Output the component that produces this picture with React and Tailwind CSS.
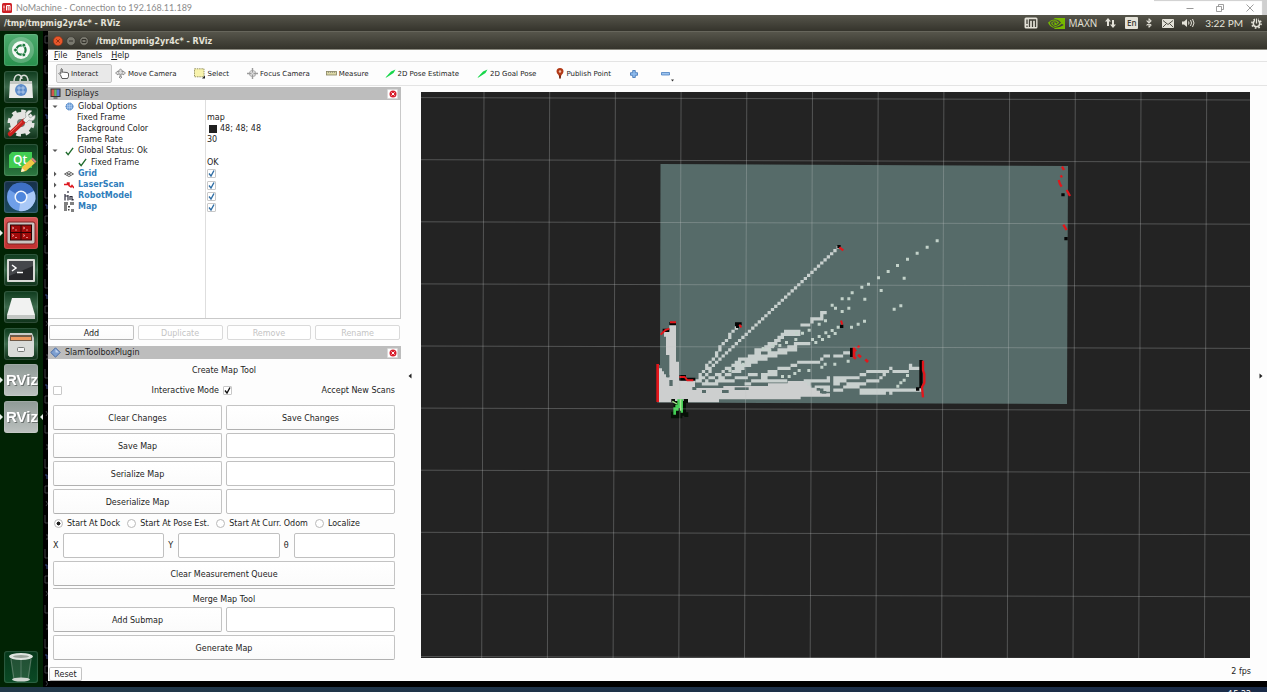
import React from "react";
import { SiNvidia } from "react-icons/si";
import { Bluetooth } from "lucide-react";

/* ---------- occupancy map drawing ---------- */

const CELL_W = 9.86;
const CELL_H = 9.3;

// Chains of free-space cells: t is the thickness in cells
const RAYS = [
  { t: 1, pts: [[172, 238], [188, 210], [225, 165], [250, 130], [290, 82]] },
  { t: 1, pts: [[178, 243], [270, 146], [362, 62], [430, 2], [595, -153]] },
  { t: 1, pts: [[205, 240], [250, 215], [290, 192], [345, 160]] },
  { t: 1, pts: [[290, 182], [330, 178]] },
  { t: 2, pts: [[345, 158], [360, 150]] },
  { t: 1, pts: [[360, 155], [385, 145]] },
  { t: 2, pts: [[380, 140], [410, 120], [440, 97], [480, 90]] },
  { t: 1, pts: [[484, 72], [510, 72], [516, 54], [545, 52], [547, 34], [560, 34]] },
  { t: 1, pts: [[488, 78], [510, 76]] },
  { t: 1, pts: [[225, 240], [285, 215], [330, 195]] },
  { t: 2, pts: [[290, 205], [350, 175], [420, 152], [470, 138]] },
  { t: 1, pts: [[470, 135], [510, 128]] },
  { t: 1, pts: [[195, 256], [250, 245], [300, 235], [350, 222]] },
  { t: 2, pts: [[370, 222], [410, 215]] },
  { t: 1, pts: [[410, 212], [440, 205], [460, 200], [480, 185], [540, 183], [560, 172], [600, 165], [632, 155]] },
  { t: 1, pts: [[320, 250], [380, 240], [440, 238]] },
  { t: 1, pts: [[500, 245], [560, 240], [580, 230], [650, 232], [680, 215], [740, 212], [755, 202], [760, 212], [805, 210], [815, 192], [820, 202], [840, 202]] },
  { t: 1, pts: [[510, 256], [560, 262], [600, 245], [650, 252], [710, 242], [730, 225]] },
  { t: 1, pts: [[560, 240], [610, 240], [640, 232]] },
  { t: 1, pts: [[535, 262], [570, 275], [620, 262], [680, 268], [840, 268]] },
  { t: 2, pts: [[660, 273], [715, 273]] },
  { t: 1, pts: [[715, 276], [748, 276]] },
];

const DOTS = [
  [577, 15], [587, 24], [607, 34], [627, 24], [627, -4], [607, -4], [637, -22], [666, -39], [686, -48],
  [716, -67], [745, -86], [773, -104], [803, -123], [832, -141], [862, -159], [892, -178],
  [793, -66], [724, -29], [675, -3], [783, 17], [763, 27], [674, 63], [655, 72], [635, 81],
  [595, 81], [577, 91], [586, 100], [567, 109], [558, 98], [548, 118], [538, 109], [528, 127], [518, 118],
  [557, 62], [538, 72], [508, 90], [488, 99], [470, 99], [468, 118], [440, 127], [420, 136], [400, 136],
  [625, 183], [585, 192], [556, 192], [546, 201], [507, 211], [478, 211], [465, 220], [448, 229], [428, 229],
  [774, 258], [783, 248], [793, 240], [803, 226], [310, 192], [270, 212], [370, 145], [390, 150],
];

const GAPS = [
  [157, 261, 12, 9], [186, 270, 12, 9], [246, 270, 20, 9], [284, 262, 42, 8],
  [514, 255, 10, 8], [530, 264, 10, 8], [545, 273, 14, 8],
];

function snap(x, y) {
  return [Math.floor((x - 8) / CELL_W), Math.floor((y + 4) / CELL_H)];
}

function buildFreeCells() {
  const cells = new Set();
  const add = (x, y, t) => {
    const [cx, cy] = snap(x, y);
    for (let k = 0; k < t; k += 1) cells.add(`${cx},${cy + k}`);
  };
  RAYS.forEach(({ t, pts }) => {
    for (let i = 0; i < pts.length - 1; i += 1) {
      const [x1, y1] = pts[i];
      const [x2, y2] = pts[i + 1];
      const steps = Math.max(
        1,
        Math.round(Math.max(Math.abs(x2 - x1) / CELL_W, Math.abs(y2 - y1) / CELL_H))
      );
      for (let s = 0; s <= steps; s += 1) {
        add(x1 + ((x2 - x1) * s) / steps, y1 + ((y2 - y1) * s) / steps, t);
      }
    }
  });
  return [...cells]
    .map((key) => {
      const [cx, cy] = key.split(",").map(Number);
      return `M${(cx * CELL_W + 8).toFixed(1)} ${(cy * CELL_H - 4).toFixed(1)}h9.9v9.4h-9.9z`;
    })
    .join("");
}

const FREE_CELLS = buildFreeCells();
const DOT_CELLS = DOTS.map(([x, y]) => `M${x - 5} ${y - 4}h9v9h-9z`).join("");
const VERTICALS = Array.from({ length: 12 }, (_, i) => 484 + i * 65.7);
const HORIZONTALS = Array.from({ length: 10 }, (_, i) => 97.6 + i * 62.1);

function MapView() {
  return (
    <svg
      viewBox="421 92 829 566"
      preserveAspectRatio="xMidYMid slice"
      className="block min-h-0 w-full flex-1 bg-[#232323]"
      role="img"
      aria-label="Map view"
    >
      <path d="M660.500 164L1068 166L1067 404L657 402.500L657 365L660 365z" fill="#566b69" />
      <g transform="translate(640 300) scale(.33333)">
        <path
          d="M88 75H108V185H117V240H165V264H250V258H384V250H443V243H512V262H540V280H570V290H482V298H237V307H57V205H66V214H72V223H78V232H88V165H78V110H72V92H88Z"
          fill="#cdcfcf"
        />
        <path d="M81 232H88V258H98V240H88V225H81Z" fill="#566b69" />
        <path d={FREE_CELLS} fill="#c8d0ce" />
        <path d={DOT_CELLS} fill="#c3d2ca" />
        {GAPS.map(([x, y, w, h]) => (
          <rect key={`${x}-${y}`} x={x} y={y} width={w} height={h} fill="#566b69" />
        ))}
        <path
          d="M88 66h20v10h-20zM68 86h20v10h-20zM118 225h20v8h28v9h-48zM285 67h20v9h-8v8h-9v-6h-3zM600 74h10v10h-10zM630 143h9v28h-9zM838 180h10v84h-10v8h-10v-10h10zM592-165h10v10h-10zM1264-320h10v9h-10zM1273-189h10v10h-10z"
          fill="#050505"
        />
        <g fill="none" stroke="#e3161b" strokeWidth="6">
          <path d="M53 192V306" strokeWidth="8" />
          <path d="M90 67H108M88 86L76 90L62 104M118 231H134L142 241H160" />
          <path d="M298 74L304 82M603 62L607 74" />
          <path d="M642 142V172L648 176M642 155L648 148M653 138L658 143M654 164L663 172M676 178L684 186" strokeWidth="8" />
          <path d="M849 182V210L853 222V248L846 262L849 292" strokeWidth="7" />
          <path d="M598-158L610-149M1266-400L1272-390M1262-374L1266-368M1256-360L1260-348L1265-340M1280-330L1290-312M1270-226L1280-210" strokeWidth="7" />
        </g>
        <path d="M94 297h11v6h26v-6h13v12h-6v28h7v14h-12v-4h-6v8h-34v-20h8v-28h-7z" fill="#071007" />
        <path d="M112 298h17v40h-7v-14h-6v8h-8v12h-8v-22h6v-8h6z" fill="#43cf54" />
        <path d="M97 304l14 8M122 298v34" stroke="#a6e88d" strokeWidth="4" />
      </g>
      <g stroke="#c4c8c8" strokeOpacity=".3" strokeWidth="1" fill="none">
        {VERTICALS.map((x) => (
          <path key={x} d={`M${x} 92L${x - 2.3} 658`} />
        ))}
        {HORIZONTALS.map((y) => (
          <path key={y} d={`M421 ${y}L1250 ${y + 2.4}`} />
        ))}
      </g>
    </svg>
  );
}

/* ---------- launcher ---------- */

function UbuntuIcon() {
  return (
    <svg viewBox="0 0 34 32" className="size-full">
      <circle cx="17" cy="16" r="13" fill="#fff" fillOpacity=".22" />
      <circle cx="17" cy="16" r="9" fill="#f6faf7" />
      <circle cx="17" cy="16" r="4.600" fill="none" stroke="#1c7a3e" strokeWidth="2.200" />
      <g fill="#1c7a3e" stroke="#f6faf7" strokeWidth=".8">
        <circle cx="11.500" cy="16" r="1.900" />
        <circle cx="19.800" cy="11.200" r="1.900" />
        <circle cx="19.800" cy="20.800" r="1.900" />
      </g>
    </svg>
  );
}

function SoftwareIcon() {
  return (
    <svg viewBox="0 0 34 32" className="size-full">
      <path d="M10 11c0-9 7-9 8-3M16 11c0-9 8-9 8 0" fill="none" stroke="#d8dcd8" strokeWidth="1.500" />
      <path d="M6 10h22l1 17H5z" fill="#e9ebe8" />
      <path d="M6 10h22v3H6z" fill="#c4c8c3" />
      <circle cx="17" cy="19" r="6" fill="#5e8dc9" />
      <path d="M13 17h8M13 21h8M15 15v8M19 15v8" stroke="#c9dcf2" strokeWidth=".7" />
    </svg>
  );
}

function SettingsIcon() {
  return (
    <svg viewBox="0 0 34 32" className="size-full">
      <circle cx="17" cy="16" r="11.500" fill="none" stroke="#e4e4e2" strokeWidth="4" strokeDasharray="4.500 4.500" />
      <circle cx="17" cy="16" r="7.500" fill="#6d7771" stroke="#e4e4e2" strokeWidth="7" />
      <path d="M6 27L20 14" stroke="#c9201e" strokeWidth="4.500" strokeLinecap="round" />
      <path d="M6.500 25.500L18 14.500" stroke="#f17067" strokeWidth="1" />
      <path d="M19 13l3-3c-2-5 3-8 6-6l-4 4 2 3 5-3c1 5-3 7-6 5l-3 3z" fill="#eceeec" stroke="#8f9692" strokeWidth=".6" />
    </svg>
  );
}

function QtIcon() {
  return (
    <svg viewBox="0 0 34 32" className="size-full">
      <path d="M8 8h20v16H5V11z" fill="#41cd52" />
      <text x="9" y="20" fontSize="12" fontWeight="600" fill="#fff" fontFamily="Open Sans, sans-serif">Qt</text>
      <path d="M17 28l1-5 9-8 4 4-9 8z" fill="#f2c744" />
      <path d="M27 15l4 4 1.500-1.500-4-4z" fill="#d9807c" />
      <path d="M17 28l1-4 3 3z" fill="#fff2d0" />
    </svg>
  );
}

function ChromiumIcon() {
  return (
    <svg viewBox="0 0 34 32" className="size-full">
      <circle cx="17" cy="16" r="14" fill="#6f9fe8" />
      <path d="M17 16L5 8.500A14 14 0 0 1 30 10z" fill="#3e6fc4" />
      <path d="M17 16L15 30A14 14 0 0 0 30 10z" fill="#a9c8f7" />
      <circle cx="17" cy="16" r="6.500" fill="#f3f7fd" />
      <circle cx="17" cy="16" r="5" fill="#4f86dd" />
    </svg>
  );
}

function TerminatorIcon() {
  return (
    <svg viewBox="0 0 34 32" className="size-full">
      <rect x="3" y="5" width="28" height="22" rx="2" fill="#c9c3c0" stroke="#7d2222" />
      <rect x="6" y="7.500" width="22" height="16" fill="#2b0303" />
      <path d="M7 8.500h9.500v6.500H7zM17.500 8.500H27v6.500h-9.500zM7 16h9.500v6.500H7zM17.500 16H27v6.500h-9.500z" fill="#a30a0a" />
      <path d="M8 10l2 1-2 1M19 10l2 1-2 1M8 17.500l2 1-2 1M19 17.500l2 1-2 1M11 13h2M22 13h2M11 20.500h2M22 20.500h2" stroke="#f5b5b0" strokeWidth=".7" fill="none" />
    </svg>
  );
}

function TerminalIcon() {
  return (
    <svg viewBox="0 0 34 32" className="size-full">
      <rect x="3" y="5" width="28" height="23" rx="1" fill="#d8dad6" />
      <rect x="5" y="7" width="24" height="19" fill="#27282b" />
      <path d="M5 7h24v5L5 22z" fill="#45474b" />
      <path d="M8 11l4 3-4 3M13 18.500h6" stroke="#fff" strokeWidth="1.500" fill="none" />
    </svg>
  );
}

function DiskIcon() {
  return (
    <svg viewBox="0 0 34 32" className="size-full">
      <path d="M8 7h18l5 17H3z" fill="#f1f2f1" />
      <path d="M3 24h28v4H3z" fill="#c3c7c4" />
    </svg>
  );
}

function FilesIcon() {
  return (
    <svg viewBox="0 0 34 32" className="size-full">
      <path d="M6 5h22l2 5v17l-2 2H6l-2-2V10z" fill="#c9cbc8" />
      <path d="M6 7h22v6H6z" fill="#6f5a48" />
      <path d="M7 9h20v3H7z" fill="#ee9a5f" />
      <path d="M4 13h26v14l-2 2H6l-2-2z" fill="#d9dbd8" />
      <rect x="13.500" y="19.500" width="7" height="4" rx="1" fill="#f5f5f5" stroke="#777b78" />
    </svg>
  );
}

function RvizIcon() {
  return (
    <svg viewBox="0 0 34 32" className="size-full drop-shadow-[1px_1px_0_#6c7270]">
      <text x="2" y="21" fontSize="15" fontWeight="700" fill="#fff" fontFamily="Liberation Sans, sans-serif">RViz</text>
    </svg>
  );
}

function TrashIcon() {
  return (
    <svg viewBox="0 0 34 32" className="size-full">
      <path d="M6 6l3 23h16l3-23z" fill="#8fa597" fillOpacity=".2" />
      <path d="M7 8l3 20M27 8l-3 20M17 9v19" stroke="#b9c6bd" strokeOpacity=".35" />
      <ellipse cx="17" cy="5.500" rx="12" ry="3.500" fill="#dde3de" />
      <ellipse cx="17" cy="5.500" rx="8" ry="1.500" fill="#98a39a" />
      <ellipse cx="17" cy="28.500" rx="9" ry="2" fill="#cfd6d0" />
    </svg>
  );
}

const TILE = "bg-gradient-to-b from-[#0c3a1c] via-[#3c6a4c] to-[#0d3018]";
const LAUNCHER = [
  { name: "Search your computer", Icon: UbuntuIcon, bg: "bg-gradient-to-b from-[#4dab6e] to-[#27914c]" },
  { name: "Ubuntu Software", Icon: SoftwareIcon, bg: TILE },
  { name: "System Settings", Icon: SettingsIcon, bg: TILE },
  { name: "Qt Creator", Icon: QtIcon, bg: "bg-gradient-to-b from-[#0c3a1c] to-[#2d7a40]" },
  { name: "Chromium", Icon: ChromiumIcon, bg: "bg-gradient-to-b from-[#16304a] to-[#1c4a5c]" },
  { name: "Terminator", Icon: TerminatorIcon, bg: "bg-gradient-to-b from-[#d65555] to-[#c22d2d]", left: true },
  { name: "Terminal", Icon: TerminalIcon, bg: TILE },
  { name: "Disk", Icon: DiskIcon, bg: TILE },
  { name: "Files", Icon: FilesIcon, bg: TILE },
  { name: "RViz", Icon: RvizIcon, bg: "bg-gradient-to-b from-[#8f9a96] to-[#bcc1bf]", left: true },
  { name: "RViz window", Icon: RvizIcon, bg: "bg-gradient-to-b from-[#8f9a96] to-[#bcc1bf]", left: true, right: true },
];

function Launcher() {
  return (
    <nav aria-label="Launcher" className="flex w-[43px] shrink-0 flex-col justify-between bg-[#012304] pt-[3px] pb-1">
      <div className="flex h-[399px] flex-col justify-between">
        {LAUNCHER.map(({ name, Icon, bg, left, right }) => (
          <div key={name} className="relative flex px-1">
            <button
              type="button"
              aria-label={name}
              className={`h-8 w-[34px] overflow-hidden rounded-[3px] shadow-[inset_0_0_1px_1px_rgba(255,255,255,0.15)] ${bg}`}
            >
              <Icon />
            </button>
            {left && (
              <svg viewBox="0 0 3 6" className="absolute top-[13px] left-0 h-[6px] w-[3px]"><path d="M0 0l3 3-3 3z" fill="#e8efe9" /></svg>
            )}
            {right && (
              <svg viewBox="0 0 3 6" className="absolute top-[13px] right-0 h-[6px] w-[3px]"><path d="M3 0L0 3l3 3z" fill="#e8efe9" /></svg>
            )}
          </div>
        ))}
      </div>
      <div className="flex px-1">
        <button type="button" aria-label="Trash" className="h-8 w-[34px] overflow-hidden rounded-[3px] bg-gradient-to-b from-[#06381a] to-[#0b4a25] shadow-[inset_0_0_1px_1px_rgba(255,255,255,0.15)]">
          <TrashIcon />
        </button>
      </div>
    </nav>
  );
}

/* ---------- toolbar icons ---------- */

const I = "size-[11px] shrink-0";

const HandIcon = () => (
  <svg viewBox="0 0 11 11" className={I}><path d="M2.500 7L1 5.500l.8-.8L3 5.500V1.200Q3.500.2 4.200 1.200V4.200h1.300l3.700.3q1.300.3 1.300 1.500V8.500L9.500 10.500H4z" fill="#fff" stroke="#333" strokeWidth=".8" /></svg>
);
const MoveIcon = () => (
  <svg viewBox="0 0 11 11" className={I}><path d="M5.500 10.500L4 9h1V6H3v1L.5 5 3 3v1h1V3H3.500L5.500.8 7.500 3H7v1h1V3l2.500 2L8 7V6H6v3h1z" fill="#ddd" stroke="#777" strokeWidth=".7" /></svg>
);
const SelectIcon = () => (
  <svg viewBox="0 0 11 11" className={I}><rect x=".5" y=".8" width="9.500" height="8" fill="#f8f3ad" stroke="#8d8a58" strokeDasharray="1.500 .8" strokeWidth=".9" /><path d="M8 10.500h3V7.500z" fill="#222" /></svg>
);
const FocusIcon = () => (
  <svg viewBox="0 0 11 11" className={I}><circle cx="5.500" cy="5.500" r="3" fill="none" stroke="#b0b0b0" strokeWidth="1.200" /><path d="M5.500 0v11M0 5.500h11" stroke="#9b9b9b" strokeWidth="1.400" /><circle cx="5.500" cy="5.500" r="1.100" fill="#ddd" /></svg>
);
const RulerIcon = () => (
  <svg viewBox="0 0 11 11" className={I}><rect x=".5" y="3.500" width="10" height="3.500" fill="#dcd8a6" stroke="#85835f" strokeWidth=".8" /><path d="M2.500 3.500v1.500M4.500 3.500v1.500M6.500 3.500v1.500M8.500 3.500v1.500" stroke="#777" strokeWidth=".6" /></svg>
);
const ArrowIcon = () => (
  <svg viewBox="0 0 11 11" className={I}><path d="M.5 9.500L6 3.500 10.500 1.500 8.500 5 1.500 9.500z" fill="#17d64a" /></svg>
);
const PinIcon = () => (
  <svg viewBox="0 0 8 11" className="h-[11px] w-2 shrink-0"><path d="M4 10.800L2.500 7Q.5 5 .5 3.500a3.500 3.500 0 0 1 7 0Q7.500 5 5.500 7z" fill="#b23a17" /><path d="M3.200 7.500h1.600v3H3.200z" fill="#6d2410" /><circle cx="4" cy="3.500" r="1.200" fill="#f3b9a4" /></svg>
);

function ToolButton({ icon, children, className = "" }) {
  return (
    <button type="button" className={`flex h-[19px] items-center gap-0.5 whitespace-nowrap ${className}`}>
      {icon}
      <span className="pt-px">{children}</span>
    </button>
  );
}

/* ---------- shared controls ---------- */

function CloseButton({ label }) {
  return (
    <button type="button" aria-label={label} className="mr-[3px] flex h-2.5 w-[11px] items-center justify-center rounded-[1px] border border-[#d9d9d9] bg-white">
      <svg viewBox="0 0 8 8" className="size-2 shrink-0"><circle cx="4" cy="4" r="3.500" fill="#d81e2c" /><path d="M2.500 2.500l3 3M5.500 2.500l-3 3" stroke="#fff" strokeWidth="1" /></svg>
    </button>
  );
}

function PanelHeader({ icon, title }) {
  return (
    <header className="flex h-[13px] items-center bg-[#bdbdbd] pl-0.5 text-[#1f1f1f]">
      {icon}
      <h2 className="ml-1 flex-1 pt-px">{title}</h2>
      <CloseButton label={`Close ${title}`} />
    </header>
  );
}

function PushButton({ children, className = "" }) {
  return (
    <button type="button" className={`rounded-[2px] border border-[#c3c3c3] border-b-[#b0b0b0] bg-gradient-to-b from-white to-[#fbfbfb] pt-0.5 ${className}`}>
      {children}
    </button>
  );
}

function TextField({ label }) {
  return <input type="text" aria-label={label} className="h-[25px] w-full min-w-0 rounded-[2px] border border-[#c0c0c0] bg-white px-1" />;
}

function Check({ id, label, checked, blue = false }) {
  return (
    <span className="relative flex size-[9px] shrink-0">
      <input id={id} aria-label={label} type="checkbox" defaultChecked={checked} className="peer size-[9px] appearance-none rounded-[1px] border border-[#c8c8c8] bg-white" />
      <svg viewBox="0 0 9 9" className="pointer-events-none absolute inset-0 hidden size-[9px] peer-checked:block">
        <path d="M2 4.500L4 7L7 1.500" fill="none" stroke={blue ? "#2e6da4" : "#111"} strokeWidth="1.400" />
      </svg>
    </span>
  );
}

/* ---------- displays tree ---------- */

const GearBlue = () => (
  <svg viewBox="0 0 10 10" className="size-[9px]"><circle cx="5" cy="5" r="4" fill="#6c9fda" stroke="#4b7fbd" strokeDasharray="1.500 .8" /><path d="M3 2v6M5 1.500v7M7 2v6M2 4h6M2 6h6" stroke="#c9def5" strokeWidth=".5" /></svg>
);
const Tick = () => (
  <svg viewBox="0 0 10 10" className="size-[9px]"><path d="M1 5.500L3.500 8.500L9 1" fill="none" stroke="#1f6a2c" strokeWidth="1.500" /></svg>
);
const GridGlyph = () => (
  <svg viewBox="0 0 10 10" className="size-2.5"><path d="M.5 5L5 2.500 9.500 5 5 7.500zM2.500 4L7 6.300M7.300 3.700L2.800 6.200" fill="none" stroke="#555" strokeWidth=".9" /></svg>
);
const LaserGlyph = () => (
  <svg viewBox="0 0 10 10" className="size-2.5"><path d="M0 4.500h3.500V3H5v2.500l2 1.500 1-1.500 2 2.500" fill="none" stroke="#dd1821" strokeWidth="1.500" /></svg>
);
const RobotGlyph = () => (
  <svg viewBox="0 0 10 10" className="size-2.5"><path d="M1 3v6.500M1 5h3M4 0v2M4 4v5.500M6 5v4M6 5.500h2V9.500M9 8v1.500" stroke="#2c2c3c" strokeWidth="1.200" fill="none" /></svg>
);
const MapGlyph = () => (
  <svg viewBox="0 0 10 10" className="size-2.5"><path d="M0 0h4v3H3v6H0zM6 0h4v3H6zM7 7h3v3H7z" fill="#808080" /><path d="M4 4h2v1.500H4zM4 7h1.500v1.500H4z" fill="#444" /></svg>
);

const ROWS = [
  { arrow: "down", icon: <GearBlue />, name: "Global Options" },
  { name: "Fixed Frame", pad: "pl-[29px]", value: "map" },
  { name: "Background Color", pad: "pl-[29px]", value: "48; 48; 48", swatch: true },
  { name: "Frame Rate", pad: "pl-[29px]", value: "30" },
  { arrow: "down", icon: <Tick />, name: "Global Status: Ok" },
  { icon: <Tick />, name: "Fixed Frame", pad: "pl-[29px]", value: "OK" },
  { arrow: "right", icon: <GridGlyph />, name: "Grid", bold: true },
  { arrow: "right", icon: <LaserGlyph />, name: "LaserScan", bold: true },
  { arrow: "right", icon: <RobotGlyph />, name: "RobotModel", bold: true },
  { arrow: "right", icon: <MapGlyph />, name: "Map", bold: true },
];

function TreeRow({ arrow, icon, name, value, swatch, bold, pad = "pl-1" }) {
  return (
    <div role="treeitem" className="flex flex-1 items-center">
      <div className={`flex w-[157px] items-center ${pad}`}>
        {arrow && (
          <svg viewBox="0 0 6 6" className="mr-1.5 size-1.5">
            <path d={arrow === "down" ? "M.5 1.500h5L3 4z" : "M2 .5v5L4.500 3z"} fill="#555" />
          </svg>
        )}
        {icon && <span className="mr-1 flex w-2.5 justify-center">{icon}</span>}
        <span className={bold ? "font-bold text-[#2f7dbb]" : ""}>{name}</span>
      </div>
      <div className="flex items-center gap-[3px] pl-0.5">
        {swatch && <span className="ml-0.5 size-2 bg-[#202020]" />}
        {bold ? <Check label={`Show ${name}`} checked blue /> : value}
      </div>
    </div>
  );
}

function DisplaysPanel() {
  return (
    <section>
      <PanelHeader
        title="Displays"
        icon={<svg viewBox="0 0 11 11" className="size-[11px]"><rect x=".5" y=".5" width="10" height="8.500" fill="#333" /><path d="M1.500 1.500h3v6.500h-3z" fill="#d4574e" /><path d="M4.300 1.500h2.500v6.500H4.300z" fill="#62b865" /><path d="M6.700 1.500h2.800v6.500H6.700z" fill="#5b7bd5" /><path d="M3.500 9.500h4v1h-4z" fill="#333" /></svg>}
      />
      <div role="tree" aria-label="Displays" className="h-[219px] border-r border-b border-[#c9c9c9] bg-[linear-gradient(to_right,transparent_157px,#dedede_157px,#dedede_158px,transparent_158px)] bg-white pt-px">
        <div className="flex h-28 flex-col">
          {ROWS.map((row, i) => (
            <TreeRow key={i} {...row} />
          ))}
        </div>
      </div>
      <div className="grid grid-cols-4 gap-1 px-px pt-1.5">
        <PushButton className="h-[15px]">Add</PushButton>
        {["Duplicate", "Remove", "Rename"].map((t) => (
          <button key={t} type="button" disabled className="h-[15px] rounded-[2px] border border-[#dadada] bg-white pt-0.5 text-[#c4c4c4]">{t}</button>
        ))}
      </div>
    </section>
  );
}

/* ---------- slam toolbox panel ---------- */

function SlamPanel() {
  return (
    <section className="mt-1.5">
      <PanelHeader
        title="SlamToolboxPlugin"
        icon={<svg viewBox="0 0 11 11" className="size-[11px]"><path d="M5.500 .8L10.200 5.500 5.500 10.200.8 5.500z" fill="#7d9fd0" stroke="#4a6da5" /><path d="M5.500 2L9 5.500H5.500z" fill="#c2d4ee" /></svg>}
      />
      <div className="px-[5px] pr-[6px]">
        <h3 className="pt-[7px] text-center leading-[10px]">Create Map Tool</h3>
        <div className="mt-[9px] grid h-[11px] grid-cols-2 gap-1">
          <div className="flex items-center justify-between">
            <Check id="interactive" />
            <label htmlFor="interactive" className="pr-[3px]">Interactive Mode</label>
          </div>
          <div className="-ml-[3px] flex items-center justify-between">
            <Check id="accept" checked />
            <label htmlFor="accept">Accept New Scans</label>
          </div>
        </div>
        <div className="mt-[9px] grid grid-cols-2 gap-x-1 gap-y-[3px]">
          <PushButton className="h-[25px]">Clear Changes</PushButton>
          <PushButton className="h-[25px]">Save Changes</PushButton>
          {["Save Map", "Serialize Map", "Deserialize Map"].map((t) => (
            <React.Fragment key={t}>
              <PushButton className="h-[25px]">{t}</PushButton>
              <TextField label={`${t} file name`} />
            </React.Fragment>
          ))}
        </div>
        <div className="flex h-[19px] items-center gap-[7px] pl-px">
          {["Start At Dock", "Start At Pose Est.", "Start At Curr. Odom", "Localize"].map((t, i) => (
            <label key={t} className="flex items-center gap-1 whitespace-nowrap">
              <input type="radio" name="start" defaultChecked={i === 0} className="size-[9px] appearance-none rounded-full border border-[#b9b9b9] bg-white checked:bg-[radial-gradient(circle,#222_35%,#fff_45%)]" />
              {t}
            </label>
          ))}
        </div>
        <div className="flex gap-1">
          {["X", "Y", "θ"].map((t) => (
            <label key={t} className="flex flex-1 items-center gap-1">
              <span className="w-1.5 shrink-0">{t}</span>
              <input type="text" className="h-[25px] w-full min-w-0 rounded-[2px] border border-[#c0c0c0] bg-white px-1" />
            </label>
          ))}
        </div>
        <PushButton className="mt-[3px] h-[25px] w-full">Clear Measurement Queue</PushButton>
        <hr className="mt-0.5 border-[#bdbdbd]" />
        <h3 className="pt-1.5 text-center leading-[10px]">Merge Map Tool</h3>
        <div className="mt-0.5 grid grid-cols-2 gap-x-1 gap-y-[3px]">
          <PushButton className="h-[25px]">Add Submap</PushButton>
          <TextField label="Submap file name" />
          <PushButton className="col-span-2 h-[25px]">Generate Map</PushButton>
        </div>
      </div>
    </section>
  );
}

/* ---------- desktop chrome ---------- */

const BAR = "bg-gradient-to-b from-[#56554b] to-[#35342c]";

function HostTitleBar() {
  return (
    <header className="flex h-[15px] items-center bg-white pl-0.5 font-[Lato,sans-serif] text-[9px] text-[#8b8b8b]">
      <svg viewBox="0 0 10 10" className="mr-1 size-2.5"><rect width="10" height="10" rx="1.500" fill="#cf1f26" /><path d="M2 2.500v3M2 6.500v1M4.500 7.500v-5h3.500v5M6.200 2.500v5" stroke="#fff" strokeWidth="1" fill="none" /></svg>
      <span className="flex-1">NoMachine - Connection to 192.168.11.189</span>
      <div className="flex h-full items-center gap-[22px] pr-[13px] pl-8 shadow-[inset_-6px_2px_1px_-1px_#cfcfcf]">
        <button type="button" aria-label="Minimize"><svg viewBox="0 0 8 8" className="size-2"><path d="M.5 4.500h7" stroke="#999" /></svg></button>
        <button type="button" aria-label="Restore"><svg viewBox="0 0 8 8" className="size-2"><path d="M.5 2.500h5v5h-5zM2.500 2.500v-2h5v5h-2" fill="none" stroke="#888" strokeWidth=".8" /></svg></button>
        <button type="button" aria-label="Close"><svg viewBox="0 0 8 8" className="size-2"><path d="M.5.5l7 7M7.500.5l-7 7" stroke="#888" strokeWidth=".8" /></svg></button>
      </div>
    </header>
  );
}

function SystemBar() {
  return (
    <header className={`flex h-4 items-center pl-1 text-[#e4e2d8] ${BAR}`}>
      <h1 className="flex-1 pt-px text-[8px] font-bold">/tmp/tmpmig2yr4c* - RViz</h1>
      <div className="flex items-center pr-[5px] font-['Open_Sans'] text-[10px] leading-none">
        <svg viewBox="0 0 14 12" className="h-3 w-3.5"><rect x=".5" y=".5" width="13" height="11" rx="1.500" fill="#e4e2d8" /><path d="M3 2.500v4.500M3 8.500v1.500M5.500 10V3h6v7M8.500 3v7" stroke="#3f3e36" strokeWidth="1.300" fill="none" /></svg>
        <SiNvidia className="ml-2.5 h-[17px] w-[17px] text-[#76b900]" />
        <span className="ml-1">MAXN</span>
        <svg viewBox="0 0 11 10" className="ml-2 h-2.5 w-[11px]"><path d="M3 0l3 3.500H4V8H2V3.500H0zM8 10L5 6.500h2V2h2v4.500h2z" fill="#e4e2d8" /></svg>
        <span className="ml-[9px] flex h-3 w-[13px] items-center justify-center rounded-[1px] bg-[#e4e2d8] text-[8px] font-semibold text-[#3c3b34]">En</span>
        <Bluetooth className="ml-1.5 size-2.5" strokeWidth={2.5} />
        <svg viewBox="0 0 12 9" className="ml-2 h-[9px] w-3"><rect width="12" height="9" rx="1" fill="#e4e2d8" /><path d="M1 1.500l5 4 5-4M1 8l3.500-3.500M11 8L7.500 4.500" stroke="#3f3e36" fill="none" strokeWidth=".9" /></svg>
        <svg viewBox="0 0 13 10" className="ml-2 h-2.5 w-[13px]"><path d="M0 3.500h2L5 1v8L2 6.500H0z" fill="#e4e2d8" /><path d="M6.500 3.500q1 1.500 0 3M8.500 2q2 3 0 6M10.500 1q3 4 0 8" stroke="#e4e2d8" fill="none" /></svg>
        <span className="ml-2.5 whitespace-nowrap font-[Lato,sans-serif]">3:22 PM</span>
        <svg viewBox="0 0 11 11" className="ml-2 size-[11px]"><circle cx="5.500" cy="5.500" r="3.200" fill="none" stroke="#e4e2d8" strokeWidth="1.500" /><circle cx="5.500" cy="5.500" r="4.600" fill="none" stroke="#e4e2d8" strokeWidth="1.600" strokeDasharray="1.600 2" /><path d="M5.500 0v5.500" stroke="#44433a" strokeWidth="3" /><path d="M5.500 .5v5" stroke="#e4e2d8" strokeWidth="1.300" /></svg>
      </div>
    </header>
  );
}

function WindowTitle() {
  return (
    <header className={`flex h-[19px] items-center gap-[3px] border-t border-b border-t-[#67665c] border-b-[#8b8a80] pl-[5px] text-[#e4e2d8] ${BAR}`}>
      <button type="button" aria-label="Close window"><svg viewBox="0 0 10 10" className="size-2.5"><circle cx="5" cy="5" r="4.700" fill="#e8572b" stroke="#8a3217" strokeWidth=".6" /><path d="M3.300 3.300l3.400 3.400M6.700 3.300L3.300 6.700" stroke="#8a2a0e" strokeWidth=".9" /></svg></button>
      <button type="button" aria-label="Minimize window"><svg viewBox="0 0 10 10" className="size-2.5"><circle cx="5" cy="5" r="4.400" fill="#7a796f" stroke="#34332c" strokeWidth=".6" /><path d="M3 5h4" stroke="#34332c" /></svg></button>
      <button type="button" aria-label="Maximize window"><svg viewBox="0 0 10 10" className="size-2.5"><circle cx="5" cy="5" r="4.400" fill="#7a796f" stroke="#34332c" strokeWidth=".6" /><path d="M3 3.500h4v3H3z" stroke="#34332c" fill="none" /></svg></button>
      <h2 className="ml-1 pt-0.5 text-[8px] font-bold">/tmp/tmpmig2yr4c* - RViz</h2>
    </header>
  );
}

function Toolbar() {
  return (
    <div className="flex h-[25px] items-center border-t border-b border-[#e4e4e4] pl-2 text-[7px]">
      <ToolButton icon={<HandIcon />} className="w-14 rounded-[2px] border border-[#c6c6c6] bg-[#e9e9e9] pl-px">Interact</ToolButton>
      <ToolButton icon={<MoveIcon />} className="ml-[3px]">Move Camera</ToolButton>
      <ToolButton icon={<SelectIcon />} className="ml-[18px]">Select</ToolButton>
      <ToolButton icon={<FocusIcon />} className="ml-[18px]">Focus Camera</ToolButton>
      <ToolButton icon={<RulerIcon />} className="ml-4">Measure</ToolButton>
      <ToolButton icon={<ArrowIcon />} className="ml-4">2D Pose Estimate</ToolButton>
      <ToolButton icon={<ArrowIcon />} className="ml-[18px]">2D Goal Pose</ToolButton>
      <ToolButton icon={<PinIcon />} className="ml-5">Publish Point</ToolButton>
      <button type="button" aria-label="Add tool" className="ml-[18px]"><svg viewBox="0 0 10 10" className="size-2.5"><path d="M3.700 1.500h2.600v2.200h2.200v2.600H6.300v2.200H3.700V6.300H1.500V3.700h2.200z" fill="#8dbaec" stroke="#3c71b4" strokeWidth=".8" /></svg></button>
      <button type="button" aria-label="Remove tool" className="ml-[21px]"><svg viewBox="0 0 14 18" className="h-[18px] w-3.5"><path d="M1.500 7.500h8v2.500h-8z" fill="#9cc3ee" stroke="#4a7fc0" strokeWidth=".8" /><path d="M11 14.500h3L12.500 16.500z" fill="#333" /></svg></button>
    </div>
  );
}

function BackgroundStrip() {
  return (
    <svg className="w-[5px] shrink-0 bg-black" aria-hidden="true">
      <defs>
        <pattern id="glyphs" width="5" height="90" patternUnits="userSpaceOnUse">
          <path d="M2 5h3M2 5v7h3M3 20q3 3 0 5M2 34v8h3M3 54h2v4h-2M2 68v9h3" stroke="#55555b" strokeWidth=".7" fill="none" />
          <path d="M2 84h2v4" stroke="#3d55a0" strokeWidth=".8" fill="none" />
        </pattern>
      </defs>
      <rect width="5" height="100%" fill="url(#glyphs)" />
    </svg>
  );
}

export default function App() {
  return (
    <div className="flex min-h-screen flex-col bg-black font-['DejaVu_Sans',sans-serif] text-[8px] leading-none text-[#1c1c1c]">
      <HostTitleBar />
      <SystemBar />
      <div className="flex flex-1">
        <Launcher />
        <BackgroundStrip />
        <div className="flex min-w-0 flex-1 flex-col pb-1.5">
          <WindowTitle />
          <div className="flex flex-1 flex-col bg-[#fdfdfd]">
            <nav aria-label="Menu" className="flex h-[11px] items-center gap-[9px] pl-1.5">
              {["File", "Panels", "Help"].map((t) => (
                <button key={t} type="button"><span className="underline">{t[0]}</span>{t.slice(1)}</button>
              ))}
            </nav>
            <Toolbar />
            <main className="flex flex-1 pt-px">
              <div className="w-[353px] shrink-0">
                <DisplaysPanel />
                <SlamPanel />
              </div>
              <button type="button" aria-label="Collapse left dock" className="flex w-5 shrink-0 items-center justify-center pt-1 pr-0.5">
                <svg viewBox="0 0 4 6" className="h-1.5 w-1"><path d="M3.500.5v5L.5 3z" fill="#222" /></svg>
              </button>
              <div className="flex min-w-0 flex-1 flex-col pt-[5px] pb-0.5">
                <MapView />
              </div>
              <button type="button" aria-label="Collapse right dock" className="flex w-[17px] shrink-0 items-center justify-center pt-1 pl-1">
                <svg viewBox="0 0 4 6" className="h-1.5 w-1"><path d="M.5.5v5L3.500 3z" fill="#222" /></svg>
              </button>
            </main>
            <footer className="flex h-[21px] items-center justify-between pr-4 pl-px">
              <PushButton className="mt-1.5 h-3.5 w-[33px]">Reset</PushButton>
              <span className="pt-0.5">2 fps</span>
            </footer>
          </div>
        </div>
      </div>
      <footer className="flex h-[5px] justify-end overflow-hidden bg-gradient-to-r from-[#22394a] to-[#1a2b48] pt-0.5 pr-4 font-['Noto_Sans'] text-[9px] leading-none text-white">15:22</footer>
    </div>
  );
}
